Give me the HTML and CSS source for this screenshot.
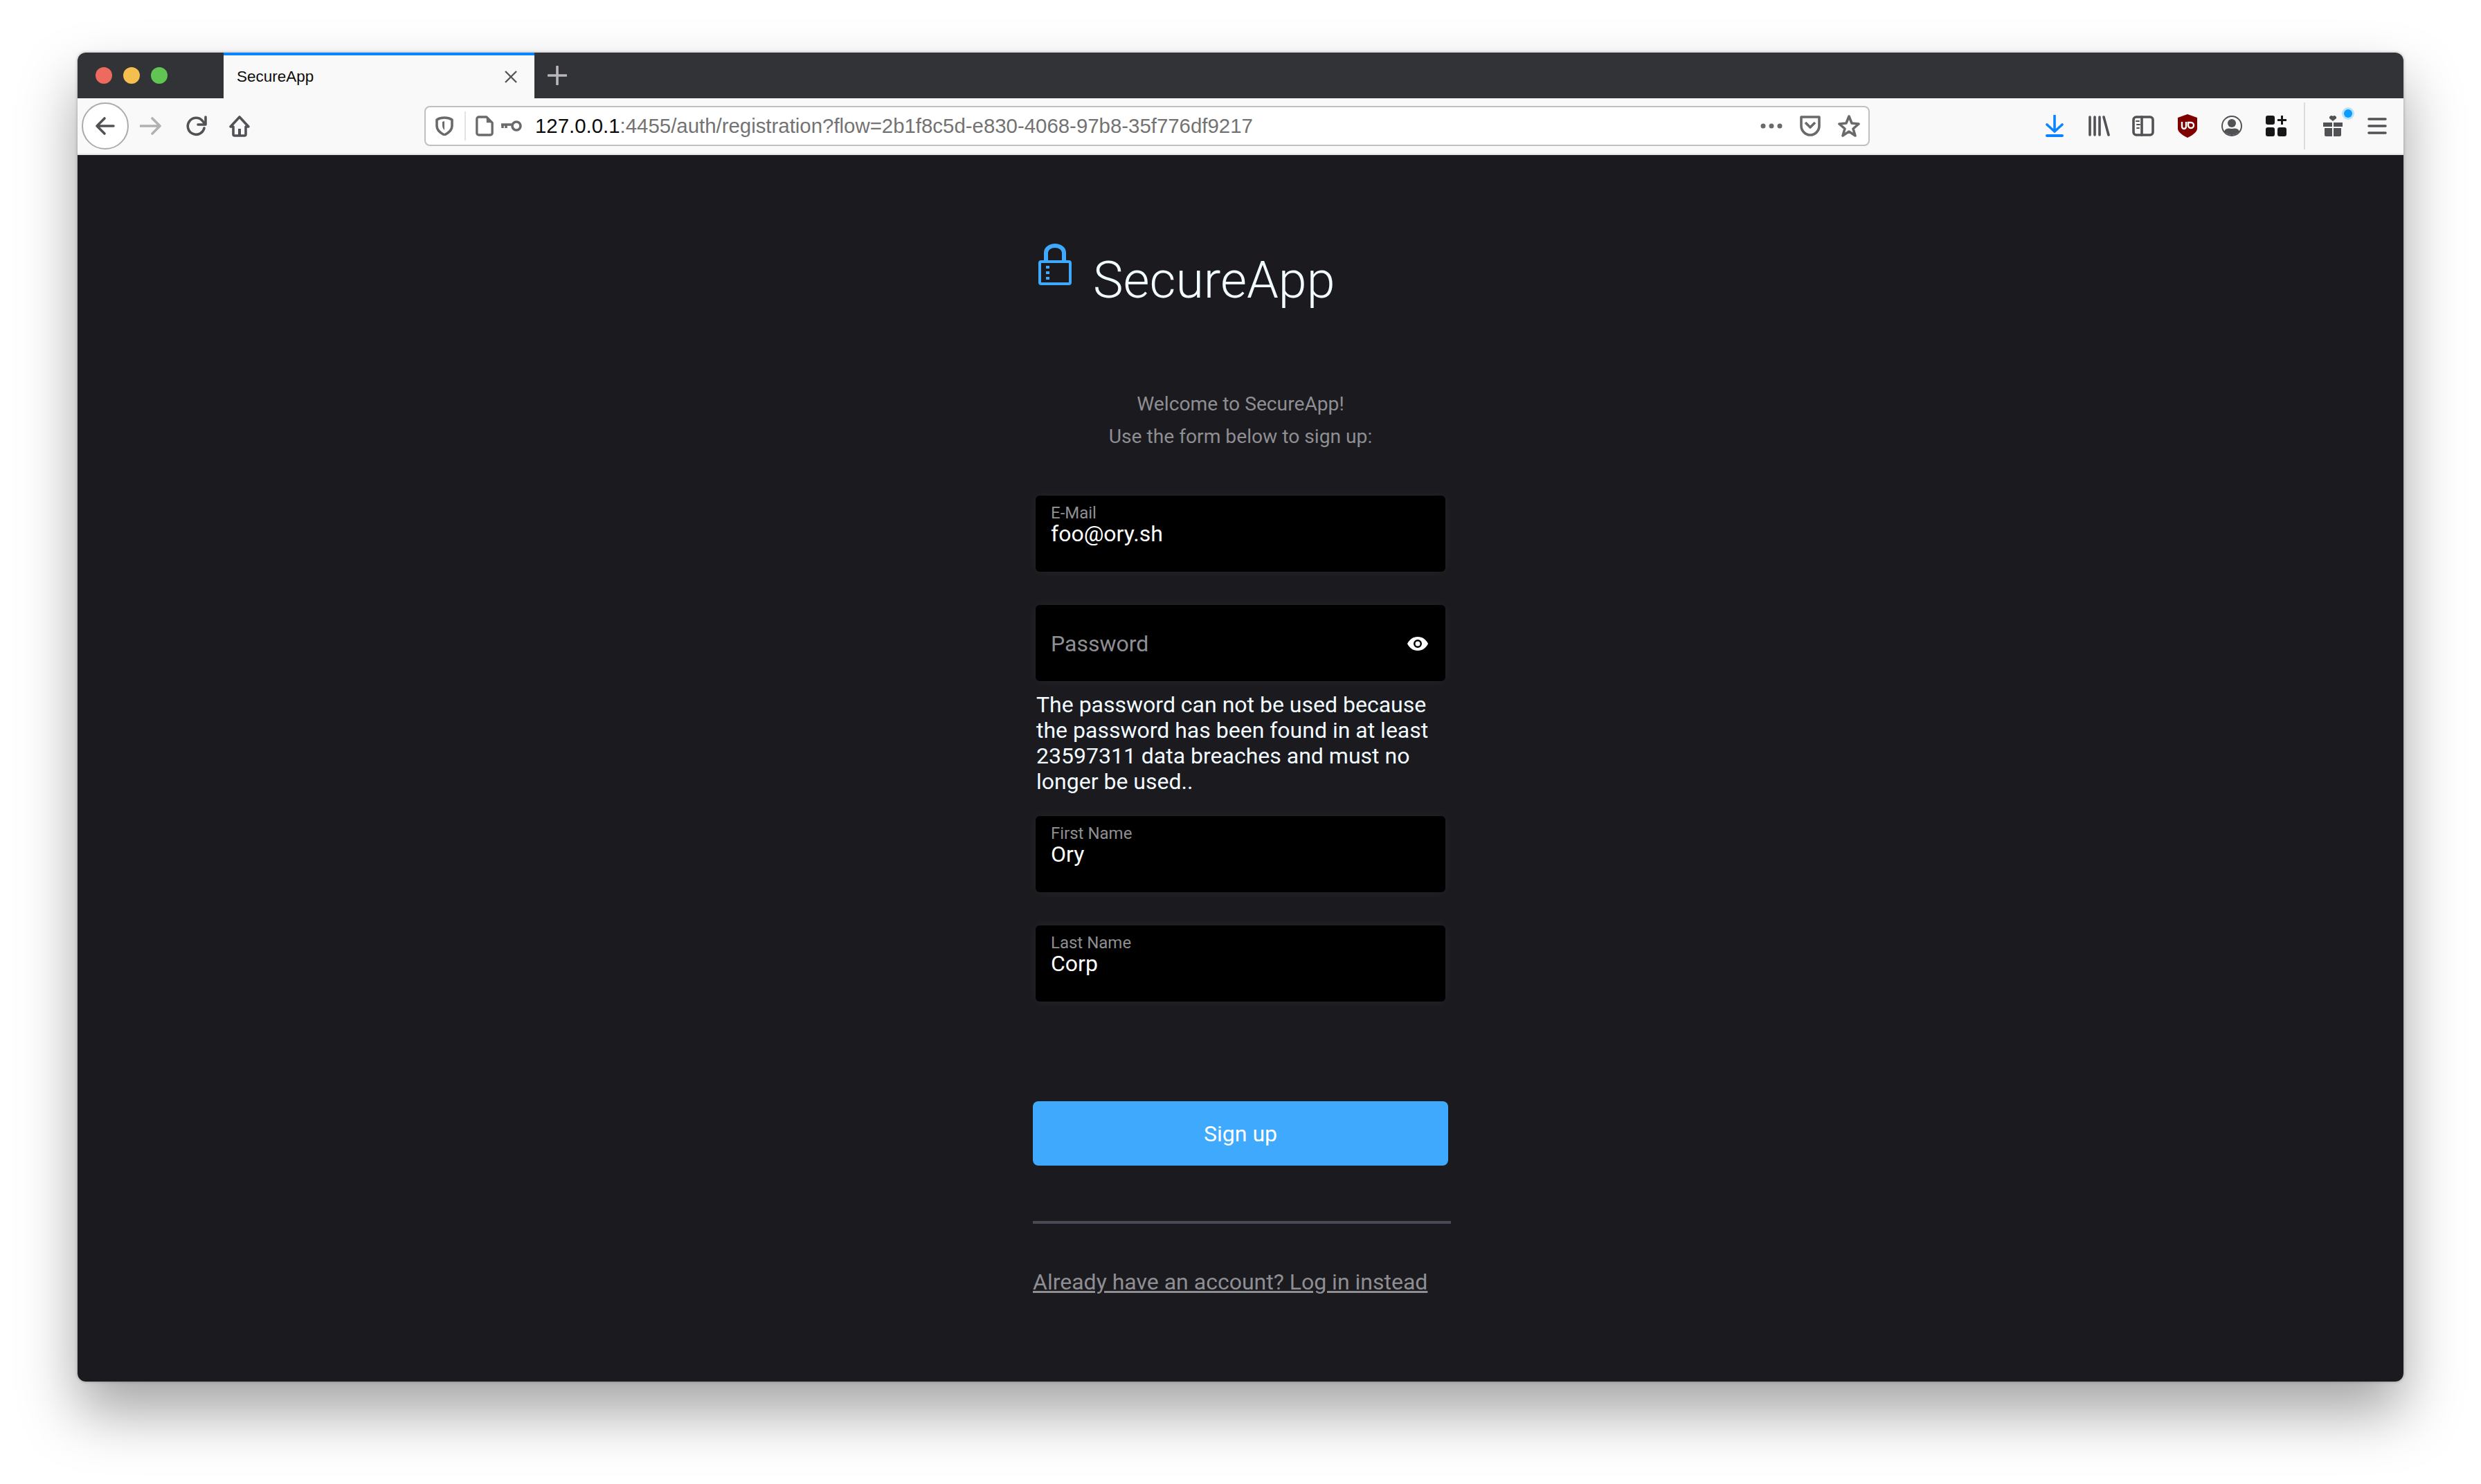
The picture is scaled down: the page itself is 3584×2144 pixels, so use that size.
FILE: index.html
```html
<!DOCTYPE html>
<html lang="en">
<head>
    <meta charset="UTF-8">
    <title>SecureApp</title>
    <link rel="stylesheet" href="styles.css">
</head>
<body>

<div class="window">
    <!-- Tab strip -->
    <div class="tab-strip">
        <div class="traffic-lights">
            <span class="light light-red"></span>
            <span class="light light-yellow"></span>
            <span class="light light-green"></span>
        </div>
        <div class="tab">
            <span class="tab-title">SecureApp</span>
            <svg class="tab-close" viewBox="0 0 20 20"><path d="M2 2l16 16M18 2L2 18"/></svg>
        </div>
        <svg class="tab-new" viewBox="0 0 28 28"><path d="M14 1v26M1 14h26"/></svg>
    </div>

    <!-- Toolbar -->
    <div class="toolbar">
        <div class="nav-buttons">
            <div class="back-btn">
                <svg class="icon" viewBox="0 0 32 32"><path d="M28 16H5M15 5L4 16l11 11"/></svg>
            </div>
            <div class="tool-btn nav-btn">
                <svg class="icon icon-disabled" viewBox="0 0 32 32"><path d="M1 16h28M18 5l11 11-11 11"/></svg>
            </div>
            <div class="tool-btn nav-btn">
                <svg class="icon" viewBox="0 0 32 32"><path d="M27 19a12 12 0 1 1-3-11l4 5"/><path d="M29 3v11H18"/></svg>
            </div>
            <div class="tool-btn nav-btn">
                <svg class="icon" viewBox="0 0 32 32"><path d="M3 17L16 3l13 14h-4v11a2 2 0 0 1-2 2H9a2 2 0 0 1-2-2V17z"/><path class="fill-dark" d="M14 20h4v10h-4z"/></svg>
            </div>
        </div>

        <div class="url-bar">
            <svg class="url-icon url-shield" viewBox="0 0 26 28"><path d="M13 2c4 0 8 1 11 3v9c0 6-5 10-11 13C7 24 2 20 2 14V5c3-2 7-3 11-3z"/><path class="fill-dark" d="M13 7v13c-2-2-3-4-3-7V8z"/></svg>
            <span class="url-sep"></span>
            <svg class="url-icon url-doc" viewBox="0 0 28 32"><path d="M5 2h12l9 9v16a3 3 0 0 1-3 3H5a3 3 0 0 1-3-3V5a3 3 0 0 1 3-3z"/><path class="fill-dark" d="M17 2v9h9z"/></svg>
            <svg class="url-icon url-key" viewBox="0 0 32 18"><circle cx="23" cy="9" r="6"/><path d="M17 7H1M3 7v5M8 7v5"/></svg>
            <span class="url-text"><span class="url-host">127.0.0.1</span>:4455/auth/registration?flow=2b1f8c5d-e830-4068-97b8-35f776df9217</span>
            <div class="url-actions">
                <svg class="url-dots" viewBox="0 0 32 8"><circle cx="4" cy="4" r="3.5"/><circle cx="16" cy="4" r="3.5"/><circle cx="28" cy="4" r="3.5"/></svg>
                <svg class="url-icon" viewBox="0 0 32 30"><path d="M3 2h26v13c0 7-6 13-13 13S3 22 3 15z"/><path d="M9 10l7 7 7-7"/></svg>
                <svg class="url-icon" viewBox="0 0 32 32"><path d="M16 2l4 10 10 1-8 7 3 10-9-6-9 6 3-10-8-7 10-1z"/></svg>
            </div>
        </div>

        <div class="tool-icons">
            <div class="tool-btn">
                <svg class="icon icon-blue" viewBox="0 0 32 32"><path d="M16 1v22M5 14l11 10 11-10"/><path d="M5 30h22" class="thick"/></svg>
            </div>
            <div class="tool-btn">
                <svg class="icon" viewBox="0 0 32 32"><path d="M3 3v26M10 3v26M17 3v26M23 3l7 26"/></svg>
            </div>
            <div class="tool-btn">
                <svg class="icon" viewBox="0 0 32 32"><rect x="2" y="3" width="28" height="26" rx="4"/><path d="M14 3v26"/><path class="thin" d="M6 9h4M7 14h4M7 19h3"/></svg>
            </div>
            <div class="tool-btn">
                <svg class="icon-solid" viewBox="0 0 32 34"><path class="ublock-shield" d="M16 0l14 5v16c0 5-8 10-14 13C10 31 2 26 2 21V5z"/><path class="ublock-mark" d="M8 11v7a3 3 0 0 0 6 0v-7M17 12h4a4 4 0 1 1-4 4z"/></svg>
            </div>
            <div class="tool-btn">
                <svg class="icon icon-thin" viewBox="0 0 32 32"><circle cx="16" cy="16" r="14"/><circle class="fill-dark" cx="16" cy="12" r="6"/><path class="fill-dark" d="M5 24c2-5 6-5 11-4 5-1 9-1 11 4-3 3-7 5-11 5s-8-2-11-5z"/></svg>
            </div>
            <div class="tool-btn">
                <svg class="icon-solid" viewBox="0 0 32 32"><rect class="ext" x="1" y="1" width="13" height="13" rx="3"/><rect class="ext" x="1" y="18" width="13" height="13" rx="3"/><rect class="ext" x="18" y="18" width="13" height="13" rx="3"/><path class="ext" d="M23 1h3v5h5v3h-5v5h-3V9h-5V6h5z"/></svg>
            </div>
            <span class="tool-sep"></span>
            <div class="tool-btn">
                <svg class="icon-solid" viewBox="0 0 32 32"><path class="gift" d="M2 11h13v6H2zM17 11h13v6H17zM4 19h11v12H6a2 2 0 0 1-2-2zM17 19h11v10a2 2 0 0 1-2 2h-9z"/><path class="gift" d="M16 9l-5-4a3 3 0 0 1 5-3 3 3 0 0 1 5 3z"/></svg>
                <span class="gift-dot"></span>
            </div>
            <div class="tool-btn">
                <svg class="icon" viewBox="0 0 32 32"><path d="M4 6h24M4 16h24M4 26h24"/></svg>
            </div>
        </div>
    </div>

    <!-- Page content -->
    <div class="page">
        <div class="auth-box">
            <div class="logo">
                <svg class="logo-icon" viewBox="0 0 48 60"><rect class="lock-body" x="2" y="26" width="44" height="32" rx="2"/><path class="lock-shackle" d="M11 26V13a13 10 0 0 1 26 0v13"/><path class="lock-dots" d="M11 32h5v4h-5zM11 40h5v4h-5zM11 48h5v4h-5z"/></svg>
                <h1 class="logo-text">SecureApp</h1>
            </div>

            <p class="intro">Welcome to SecureApp!<br>Use the form below to sign up:</p>

            <form class="signup-form">
                <label class="field">
                    <span class="field-label">E-Mail</span>
                    <input class="field-input" type="text" value="foo@ory.sh">
                </label>

                <label class="field field-empty">
                    <input class="field-input" type="text" placeholder="Password">
                    <svg class="eye" viewBox="0 0 32 22"><path d="M16 1C9 1 4 5 1 11c3 6 8 10 15 10s12-4 15-10C28 5 23 1 16 1zm0 16a6 6 0 1 1 0-12 6 6 0 0 1 0 12zm0-9.500a3.500 3.500 0 1 0 0 7 3.500 3.500 0 0 0 0-7z"/></svg>
                </label>
                <p class="field-error">The password can not be used because the password has been found in at least 23597311 data breaches and must no longer be used..</p>

                <label class="field field-first">
                    <span class="field-label">First Name</span>
                    <input class="field-input" type="text" value="Ory">
                </label>

                <label class="field field-last">
                    <span class="field-label">Last Name</span>
                    <input class="field-input" type="text" value="Corp">
                </label>

                <button class="submit-btn" type="button">Sign up</button>
            </form>

            <hr class="divider">
            <a class="login-link" href="#">Already have an account? Log in instead</a>
        </div>
    </div>
</div>

</body>
</html>
```

FILE: styles.css
```css
body {
    margin: 0;
    background-color: #ffffff;
    font-family: "Roboto", sans-serif;
    padding: 76px 112px 0;
    height: 2144px;
    box-sizing: border-box;
    overflow: hidden;
}

p, h1 {
    margin: 0;
}

.window {
    width: 3360px;
    height: 1920px;
    border-radius: 12px;
    overflow: hidden;
    display: flex;
    flex-direction: column;
    box-shadow: 0 44px 84px rgba(0, 0, 0, 0.36), 0 0 4px rgba(0, 0, 0, 0.3);
}

/* tab strip */
.tab-strip {
    height: 66px;
    flex: none;
    background-color: #323336;
    display: flex;
}

.traffic-lights {
    width: 211px;
    padding: 21px 0 0 26px;
    box-sizing: border-box;
    display: flex;
    gap: 16px;
}

.light {
    width: 24px;
    height: 24px;
    border-radius: 50%;
}

.light-red { background-color: #ec6a5e; }
.light-yellow { background-color: #f5bf4f; }
.light-green { background-color: #61c554; }

.tab {
    width: 449px;
    box-sizing: border-box;
    border-top: 4px solid #0a84ff;
    background-color: #f9f9fa;
    padding: 0 24px 0 19px;
    display: flex;
    align-items: center;
    justify-content: space-between;
}

.tab-title {
    font-family: "Liberation Sans", sans-serif;
    font-size: 22.500px;
    color: #0c0c0d;
}

.tab-close {
    width: 20px;
    height: 20px;
    fill: none;
    stroke: #55565a;
    stroke-width: 2.4;
}

.tab-new {
    width: 28px;
    height: 28px;
    margin: 19px 0 0 19px;
    fill: none;
    stroke: #b8b8ba;
    stroke-width: 3.600;
    stroke-linecap: round;
}

/* toolbar */
.toolbar {
    height: 80px;
    flex: none;
    background-color: #f9f9fa;
    border-bottom: 2px solid #e4e4e6;
    display: flex;
    align-items: center;
    position: relative;
}

.nav-buttons {
    width: 501px;
    flex: none;
    display: flex;
    align-items: center;
    padding-left: 6px;
    box-sizing: border-box;
}

.back-btn {
    width: 68px;
    height: 68px;
    flex: none;
    box-sizing: border-box;
    border: 2px solid #ababab;
    border-radius: 50%;
    background-color: #ffffff;
    display: flex;
    align-items: center;
    justify-content: center;
}

.tool-btn {
    width: 64px;
    height: 64px;
    flex: none;
    display: flex;
    align-items: center;
    justify-content: center;
    position: relative;
}

.nav-btn:nth-child(3) {
    margin-left: 2px;
}

.nav-btn:nth-child(4) {
    margin-left: -2px;
}

.icon {
    width: 32px;
    height: 32px;
    fill: none;
    stroke: #515255;
    stroke-width: 3.600;
    stroke-linecap: round;
    stroke-linejoin: round;
}

.icon-disabled { stroke: #b1b1b3; }
.icon-blue { stroke: #0a84ff; }
.icon-thin { stroke-width: 2; }
.thick { stroke-width: 4; }
.thin { stroke-width: 2; }

.icon .fill-dark {
    fill: #515255;
    stroke: none;
}

.url-bar {
    width: 2088px;
    height: 58px;
    flex: none;
    box-sizing: border-box;
    background-color: #ffffff;
    border: 2px solid #c0c0c2;
    border-radius: 8px;
    display: flex;
    align-items: center;
    padding-left: 14px;
}

.url-icon {
    width: 26px;
    height: 28px;
    flex: none;
    fill: none;
    stroke: #6a6a6d;
    stroke-width: 3.600;
    stroke-linejoin: round;
}

.url-icon .fill-dark {
    fill: #6a6a6d;
    stroke: none;
}

.url-sep {
    width: 2px;
    height: 42px;
    margin: 0 14px 0 16px;
    background-color: #e3e3e5;
}

.url-doc {
    height: 32px;
}

.url-key {
    width: 32px;
    height: 18px;
    margin-left: 10px;
}

.url-text {
    margin-left: 18px;
    font-family: "Liberation Sans", sans-serif;
    font-size: 29.400px;
    color: #737373;
    white-space: nowrap;
}

.url-host {
    color: #0c0c0d;
}

.url-actions {
    margin-left: auto;
    display: flex;
    align-items: center;
    gap: 24px;
    padding-right: 12px;
}

.url-dots {
    width: 32px;
    height: 8px;
    fill: #6a6a6d;
}

.url-actions .url-icon {
    width: 32px;
    height: 32px;
}

.tool-icons {
    margin-left: 235px;
    display: flex;
    align-items: center;
}

.icon-solid {
    width: 32px;
    height: 34px;
}

.ublock-shield { fill: #800000; }

.ublock-mark {
    fill: none;
    stroke: #ffffff;
    stroke-width: 2.4;
}

.ext { fill: #17171a; }
.gift { fill: #515255; }

.tool-sep {
    width: 2px;
    height: 68px;
    margin: 0 8px;
    background-color: #dcdcde;
}

.gift-dot {
    position: absolute;
    top: 8px;
    right: 4px;
    width: 12px;
    height: 12px;
    border-radius: 50%;
    background-color: #0a9cff;
    box-shadow: 0 0 0 3px rgba(10, 156, 255, 0.25);
}

/* page */
.page {
    flex: 1;
    background-color: #1a1a1f;
    display: flex;
    justify-content: center;
}

.auth-box {
    width: 600px;
}

.logo {
    display: flex;
    align-items: flex-start;
    margin: 128px 0 0 8px;
    height: 96px;
}

.logo-icon {
    width: 48px;
    height: 60px;
    flex: none;
}

.lock-body {
    fill: none;
    stroke: #3ea9fd;
    stroke-width: 4;
}

.lock-shackle {
    fill: none;
    stroke: #3ea9fd;
    stroke-width: 6;
}

.lock-dots {
    fill: #3ea9fd;
}

.logo-text {
    margin: 10px 0 0 31px;
    font-size: 73.500px;
    line-height: 86px;
    font-weight: 300;
    color: #f2fbff;
}

.intro {
    margin-top: 112px;
    text-align: center;
    font-size: 28.200px;
    line-height: 47px;
    color: #8e8e93;
}

.signup-form {
    margin-top: 62px;
    display: flex;
    flex-direction: column;
}

.field {
    display: block;
    position: relative;
    width: 592px;
    height: 110px;
    margin-left: 4px;
    box-sizing: border-box;
    padding: 13px 22px 0;
    background-color: #000000;
    border-radius: 6px;
    box-shadow: 0 0 16px rgba(255, 255, 255, 0.05);
}

.field-label {
    display: block;
    font-size: 24px;
    line-height: 24px;
    color: #8e8e93;
}

.field-input {
    display: block;
    width: 100%;
    padding: 0;
    border: none;
    outline: none;
    background: transparent;
    font-family: "Roboto", sans-serif;
    font-size: 32px;
    line-height: 36px;
    color: #ffffff;
}

.field-input::placeholder {
    color: #8e8e93;
    opacity: 1;
}

.field-empty {
    margin-top: 48px;
    padding-top: 38px;
}

.eye {
    position: absolute;
    top: 45px;
    right: 24px;
    width: 32px;
    height: 22px;
    fill: #ffffff;
    fill-rule: evenodd;
}

.field-error {
    margin: 16px 0 0 5px;
    font-size: 32px;
    line-height: 37px;
    color: #f2fbff;
}

.field-first {
    margin-top: 31px;
}

.field-last {
    margin-top: 48px;
}

.submit-btn {
    margin-top: 144px;
    height: 93px;
    border: none;
    border-radius: 8px;
    background-color: #3ea9fd;
    font-family: "Roboto", sans-serif;
    font-size: 32px;
    color: #ffffff;
}

.divider {
    width: 604px;
    height: 4px;
    margin: 80px 0 0;
    border: none;
    background-color: #4a4a55;
}

.login-link {
    display: inline-block;
    margin-top: 62px;
    font-size: 32px;
    line-height: 44px;
    color: #8e8e93;
}
```
